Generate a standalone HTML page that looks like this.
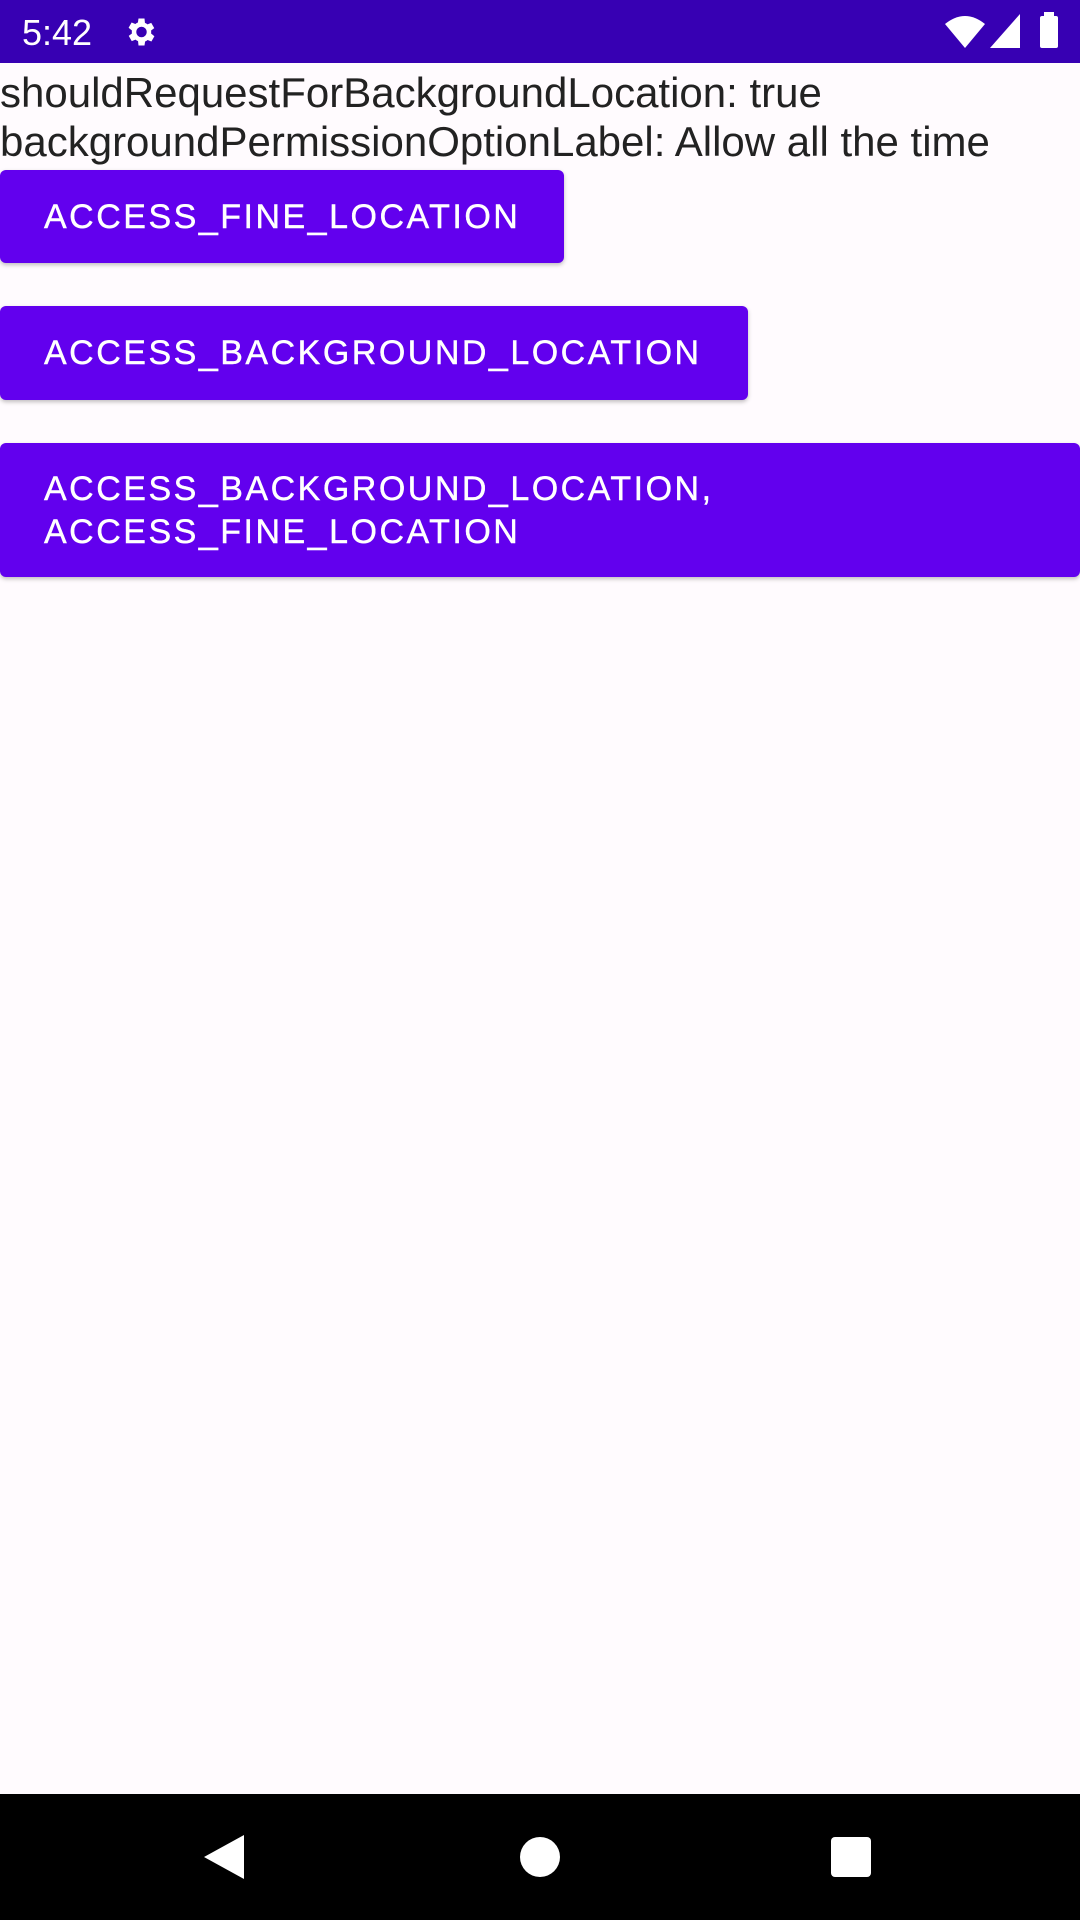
<!DOCTYPE html>
<html><head><meta charset="utf-8"><style>
html,body{margin:0;padding:0}
body{width:1080px;height:1920px;position:relative;background:#fffbfe;font-family:"Liberation Sans",sans-serif;overflow:hidden}
.sb{position:absolute;left:0;top:0;width:1080px;height:63px;background:#3700b3;color:#fff}
.time{position:absolute;left:22px;top:12px;font-size:36px}
.txt{position:absolute;left:0;font-size:42px;color:#222;white-space:nowrap;letter-spacing:0}
.btn{position:absolute;left:0;background:#6200ee;border-radius:6px;color:#fff;font-size:34px;letter-spacing:2.5px;box-shadow:0 2px 4px rgba(0,0,0,.25)}
.btn span{position:absolute;left:44px;line-height:43px;-webkit-text-stroke:0.4px #fff}
.nav{position:absolute;left:0;top:1794px;width:1080px;height:126px;background:#000}
</style></head><body>
<div class="sb">
<div class="time">5:42</div>
<svg style="position:absolute;left:122px;top:14px" width="36" height="36" viewBox="0 0 24 24"><path fill="#fff" d="M19.4 13a7.5 7.5 0 000-2l2.1-1.6-2-3.5-2.5 1a7 7 0 00-1.7-1L15 3h-4l-.4 2.7a7 7 0 00-1.7 1l-2.5-1-2 3.5L6.6 11a7.5 7.5 0 000 2l-2.1 1.6 2 3.5 2.5-1a7 7 0 001.7 1L11 21h4l.4-2.7a7 7 0 001.7-1l2.5 1 2-3.5zM13 15.5a3.5 3.5 0 110-7 3.5 3.5 0 010 7z"/></svg>
<svg style="position:absolute;left:945px;top:14px" width="40" height="34" viewBox="0 0 40 34"><path fill="#fff" d="M0 10Q20-6 40 10L20 34z"/></svg>
<svg style="position:absolute;left:990px;top:14px" width="30" height="34" viewBox="0 0 30 34"><path fill="#fff" d="M30 0V34H0z"/></svg>
<div style="position:absolute;left:1040px;top:16px;width:18px;height:32px;background:#fff;border-radius:2px"></div>
<div style="position:absolute;left:1044px;top:12px;width:10px;height:5px;background:#fff"></div>
</div>
<div class="txt" style="top:69px">shouldRequestForBackgroundLocation: true</div>
<div class="txt" style="top:118px">backgroundPermissionOptionLabel: Allow all the time</div>
<div class="btn" style="top:170px;width:564px;height:93px"><span style="top:26px">ACCESS_FINE_LOCATION</span></div>
<div class="btn" style="top:306px;width:748px;height:94px"><span style="top:26px">ACCESS_BACKGROUND_LOCATION</span></div>
<div class="btn" style="top:443px;width:1080px;height:134px"><span style="top:25px">ACCESS_BACKGROUND_LOCATION,<br>ACCESS_FINE_LOCATION</span></div>
<div class="nav">
<svg style="position:absolute;left:204px;top:41px" width="42" height="44" viewBox="0 0 42 44"><path fill="#fff" d="M40 0V44L0 22z"/></svg>
<div style="position:absolute;left:520px;top:43px;width:40px;height:40px;border-radius:50%;background:#fff"></div>
<div style="position:absolute;left:831px;top:43px;width:40px;height:40px;border-radius:4px;background:#fff"></div>
</div>
</body></html>
